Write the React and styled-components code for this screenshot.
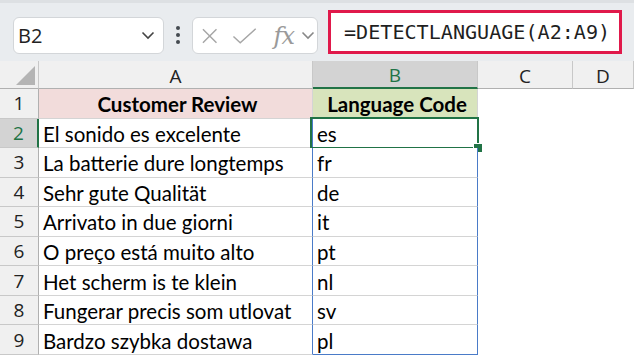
import React from "react";
import styled, { createGlobalStyle } from "styled-components";

const GlobalStyle = createGlobalStyle`
  html, body {
    margin: 0;
    padding: 0;
    background: #ffffff;
  }
  body {
    width: 634px;
    height: 358px;
    overflow: hidden;
    font-family: "Lato", "Open Sans", sans-serif;
  }
`;

const Toolbar = styled.div`
  height: 61px;
  box-sizing: border-box;
  background: #e9ecef;
  border-top: 3px solid #dde0e3;
  display: flex;
  align-items: flex-start;
  padding: 4px 8px 0 13px;
`;

const NameBox = styled.div`
  margin-top: 10px;
  width: 151px;
  height: 37px;
  box-sizing: border-box;
  background: #ffffff;
  border: 1px solid #d3d6d9;
  border-radius: 6px;
  display: flex;
  align-items: center;
  justify-content: space-between;
  padding: 0 8px 0 4px;
  font-family: "Open Sans", "Liberation Sans", sans-serif;
  font-size: 20px;
  color: #222;
`;

const Dots = styled.div`
  margin: 19px 12px 0 12px;
  display: flex;
  flex-direction: column;
  gap: 3px;
  span {
    width: 4px;
    height: 4px;
    border-radius: 50%;
    background: #444a50;
  }
`;

const IconBox = styled.div`
  margin-top: 10px;
  width: 126px;
  height: 37px;
  box-sizing: border-box;
  background: #ffffff;
  border: 1px solid #d3d6d9;
  border-radius: 6px;
  display: flex;
  align-items: center;
  padding: 0 2px 0 8px;
  gap: 14px;
`;

const FxGroup = styled.span`
  display: flex;
  align-items: center;
  gap: 7px;
  margin-left: 2px;
`;

const Fx = styled.span`
  font-family: "DejaVu Serif", "Liberation Serif", serif;
  font-style: italic;
  font-size: 24px;
  color: #9a9a9a;
  letter-spacing: -1px;
`;

const FormulaBar = styled.div`
  margin-left: 10px;
  margin-top: 3px;
  width: 294px;
  height: 44px;
  box-sizing: border-box;
  background: #ffffff;
  border: 3px solid #e0194b;
  display: flex;
  align-items: center;
  padding-left: 13px;
  font-family: "DejaVu Sans Mono", "Liberation Mono", monospace;
  font-size: 20.1px;
  color: #1f1f1f;
`;

const Grid = styled.div`
  display: grid;
  grid-template-columns: 39px 274px 165px 95px 1fr;
  grid-template-rows: 28px repeat(9, 29.55px);
  background: #ffffff;
`;

const Corner = styled.div`
  background: #f0f0f0;
  border-right: 1px solid #c8c8c8;
  border-bottom: 1px solid #b0b0b0;
  position: relative;
  box-sizing: border-box;
  &::after {
    content: "";
    position: absolute;
    right: 3px;
    bottom: 3px;
    width: 0;
    height: 0;
    border-left: 19px solid transparent;
    border-bottom: 19px solid #b4b4b4;
  }
`;

const ColHead = styled.div`
  box-sizing: border-box;
  background: ${(p) => (p.$active ? "#d3d3d3" : "#f0f0f0")};
  color: ${(p) => (p.$active ? "#217346" : "#222")};
  border-right: 1px solid #c8c8c8;
  border-bottom: ${(p) => (p.$active ? "2px solid #217346" : "1px solid #b0b0b0")};
  display: flex;
  align-items: center;
  justify-content: center;
  font-family: "Open Sans", "Liberation Sans", sans-serif;
  font-size: 19px;
  padding-top: 2px;
`;

const RowHead = styled.div`
  box-sizing: border-box;
  background: ${(p) => (p.$active ? "#d3d3d3" : "#f0f0f0")};
  color: ${(p) => (p.$active ? "#217346" : "#222")};
  border-right: ${(p) => (p.$active ? "2px solid #217346" : "1px solid #b0b0b0")};
  border-bottom: 1px solid #c8c8c8;
  display: flex;
  align-items: center;
  justify-content: center;
  font-family: "Open Sans", "Liberation Sans", sans-serif;
  font-size: 19px;
`;

const Cell = styled.div`
  box-sizing: border-box;
  position: relative;
  display: flex;
  align-items: center;
  justify-content: ${(p) => (p.$center ? "center" : "flex-start")};
  padding-left: 4px;
  padding-top: 2px;
  font-size: 20.5px;
  font-weight: ${(p) => (p.$bold ? 700 : 400)};
  color: #000;
  background: ${(p) => p.$bg || "#ffffff"};
  border-right: 1px solid ${(p) => p.$edge || "#d4d4d4"};
  border-bottom: 1px solid ${(p) => p.$under || "#d4d4d4"};
  white-space: nowrap;
`;

const Empty = styled.div`
  background: #ffffff;
`;

const Selection = styled.div`
  position: absolute;
  left: -3px;
  top: -2px;
  right: -2px;
  bottom: -2px;
  border: 2px solid #217346;
  pointer-events: none;
  &::after {
    content: "";
    position: absolute;
    right: -6px;
    bottom: -6px;
    width: 8px;
    height: 8px;
    background: #217346;
    border: 1px solid #ffffff;
  }
`;

const rows = [
  ["El sonido es excelente", "es"],
  ["La batterie dure longtemps", "fr"],
  ["Sehr gute Qualität", "de"],
  ["Arrivato in due giorni", "it"],
  ["O preço está muito alto", "pt"],
  ["Het scherm is te klein", "nl"],
  ["Fungerar precis som utlovat", "sv"],
  ["Bardzo szybka dostawa", "pl"],
];

const Chevron = ({ color = "#444" }) => (
  <svg width="14" height="9" viewBox="0 0 14 9" fill="none">
    <path d="M1.5 1.5 L7 7 L12.5 1.5" stroke={color} strokeWidth="1.6" />
  </svg>
);

export default function App() {
  return (
    <>
      <GlobalStyle />
      <Toolbar>
        <NameBox>
          <span>B2</span>
          <Chevron />
        </NameBox>
        <Dots>
          <span />
          <span />
          <span />
        </Dots>
        <IconBox>
          <svg width="18" height="18" viewBox="0 0 18 18">
            <path d="M2 2 L16 16 M16 2 L2 16" stroke="#a6a6a6" strokeWidth="1.5" />
          </svg>
          <svg width="26" height="18" viewBox="0 0 26 18" fill="none">
            <path d="M1.5 9.5 L8.5 16 L24.5 1.5" stroke="#a6a6a6" strokeWidth="1.5" />
          </svg>
          <FxGroup>
            <Fx>fx</Fx>
            <Chevron color="#888" />
          </FxGroup>
        </IconBox>
        <FormulaBar>=DETECTLANGUAGE(A2:A9)</FormulaBar>
      </Toolbar>
      <Grid>
        <Corner />
        <ColHead>A</ColHead>
        <ColHead $active>B</ColHead>
        <ColHead>C</ColHead>
        <ColHead>D</ColHead>

        <RowHead>1</RowHead>
        <Cell $bold $center $bg="#f2dcdb">Customer Review</Cell>
        <Cell $bold $center $bg="#d8e4bc">Language Code</Cell>
        <Empty />
        <Empty />

        {rows.map(([review, code], i) => (
          <React.Fragment key={code}>
            <RowHead $active={i === 0}>{i + 2}</RowHead>
            <Cell $edge="#4a7bc8">{review}</Cell>
            <Cell
              $edge="#4a7bc8"
              $under={i === rows.length - 1 ? "#4a7bc8" : "#d4d4d4"}
            >
              {code}
              {i === 0 && <Selection />}
            </Cell>
            <Empty />
            <Empty />
          </React.Fragment>
        ))}
      </Grid>
    </>
  );
}
